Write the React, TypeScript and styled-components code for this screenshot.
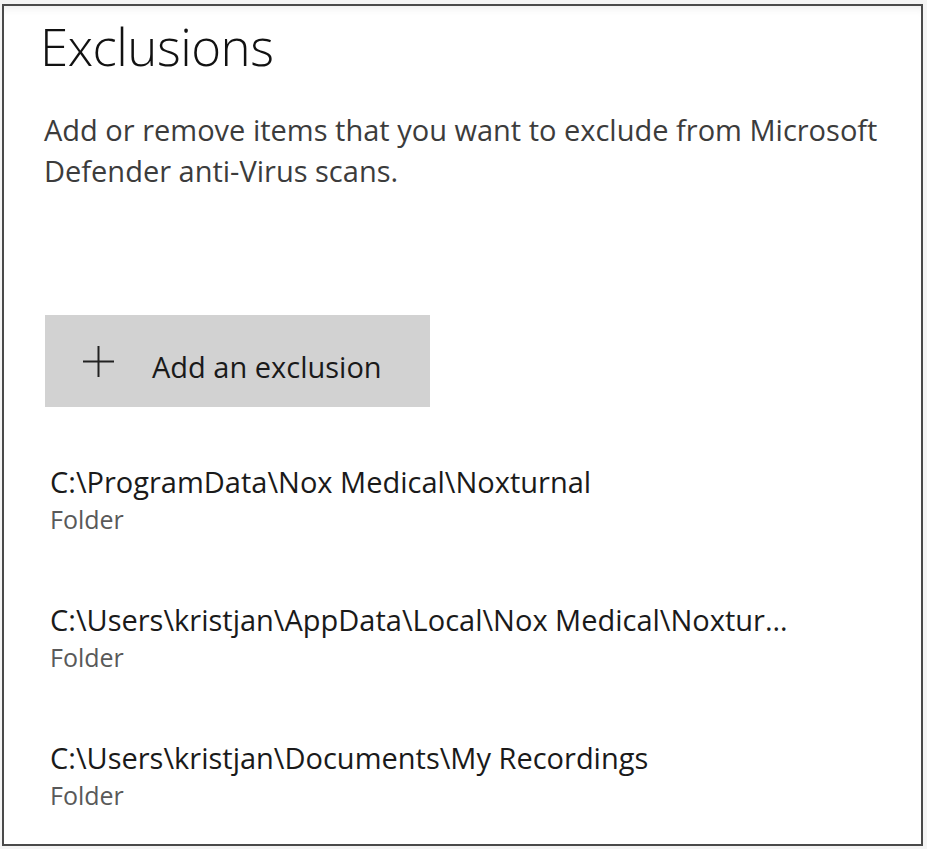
import React from "react";
import styled, { createGlobalStyle } from "styled-components";

const GlobalStyle = createGlobalStyle`
  html, body {
    margin: 0;
    padding: 0;
    background: #f4f4f4;
  }
  body {
    font-family: "Open Sans", "Noto Sans", sans-serif;
  }
`;

const Frame = styled.div`
  box-sizing: border-box;
  width: 921px;
  height: 842px;
  margin: 4px 0 0 2px;
  border: 2px solid #4a4a4a;
  background: #ffffff;
  box-shadow: inset 0 8px 8px -6px rgba(0, 0, 0, 0.08);
  padding: 0 0 0 41px;
  display: flex;
  flex-direction: column;
  overflow: hidden;
`;

const Title = styled.h1`
  margin: 7px 0 0 -5px;
  font-size: 51px;
  font-weight: 300;
  line-height: 66px;
  color: #111111;
  letter-spacing: -0.5px;
`;

const Description = styled.p`
  margin: 30px 0 0 -1px;
  width: 860px;
  font-size: 29px;
  line-height: 41px;
  color: #3c3c3c;
`;

const AddButton = styled.button`
  box-sizing: border-box;
  margin-top: 124px;
  width: 385px;
  height: 92px;
  border: none;
  background: #d2d2d2;
  display: flex;
  align-items: center;
  padding: 10px 0 0 38px;
  gap: 38px;
  font-family: "Open Sans", "Noto Sans", sans-serif;
  font-size: 29px;
  color: #1a1a1a;
  cursor: pointer;
`;

const IconWrap = styled.span`
  display: flex;
  margin-bottom: 9px;
`;

const List = styled.div`
  margin-top: 56px;
  display: flex;
  flex-direction: column;
  gap: 64px;
  padding-left: 5px;
`;

const Item = styled.div`
  display: flex;
  flex-direction: column;
  width: 745px;
`;

const ItemPath = styled.div`
  font-size: 29px;
  line-height: 38px;
  color: #1a1a1a;
  white-space: nowrap;
  overflow: hidden;
  text-overflow: ellipsis;
`;

const ItemType = styled.div`
  font-size: 25px;
  line-height: 36px;
  color: #595959;
`;

const PlusIcon = () => (
  <svg width="31" height="31" viewBox="0 0 31 31" aria-hidden="true">
    <path d="M15.5 0v31M0 15.5h31" stroke="#222" strokeWidth="2" fill="none" />
  </svg>
);

const items = [
  "C:\\ProgramData\\Nox Medical\\Noxturnal",
  "C:\\Users\\kristjan\\AppData\\Local\\Nox Medical\\Noxturnal",
  "C:\\Users\\kristjan\\Documents\\My Recordings",
];

export default function App() {
  return (
    <>
      <GlobalStyle />
      <Frame>
        <Title>Exclusions</Title>
        <Description>
          Add or remove items that you want to exclude from Microsoft Defender anti-Virus scans.
        </Description>
        <AddButton>
          <IconWrap>
            <PlusIcon />
          </IconWrap>
          <span>Add an exclusion</span>
        </AddButton>
        <List>
          {items.map((p) => (
            <Item key={p}>
              <ItemPath>{p}</ItemPath>
              <ItemType>Folder</ItemType>
            </Item>
          ))}
        </List>
      </Frame>
    </>
  );
}
